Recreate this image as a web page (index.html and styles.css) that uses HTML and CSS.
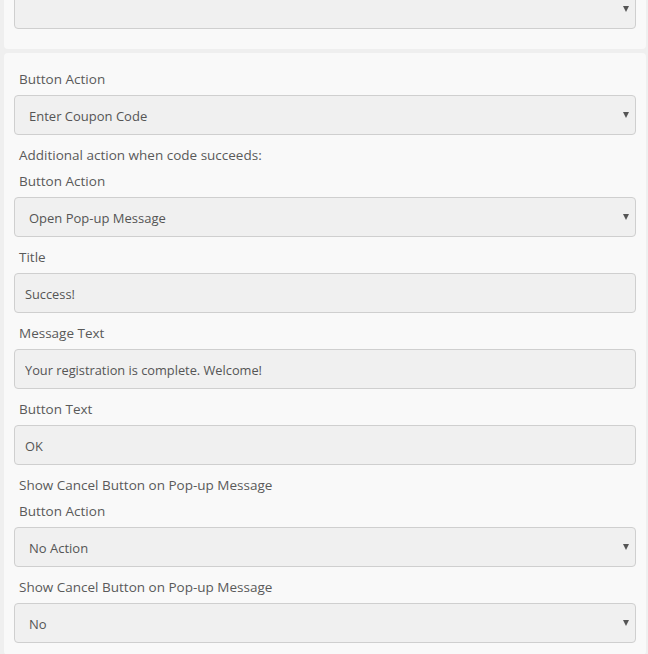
FILE: index.html
```html
<!DOCTYPE html>
<html lang="en">
  <head>
    <meta charset="UTF-8" />
    <meta name="viewport" content="width=device-width, initial-scale=1.0" />
    <title>Button Settings</title>
    <link rel="stylesheet" href="styles.css">
  </head>
  <body>
    <div class="panel panel-top">
      <div class="select-box"><span class="value"></span></div>
    </div>

    <div class="panel">
      <div class="field">
        <label>Button Action</label>
        <div class="select-box"><span class="value">Enter Coupon Code</span></div>
      </div>
      <div class="field">
        <label>Additional action when code succeeds:</label>
        <label>Button Action</label>
        <div class="select-box"><span class="value">Open Pop-up Message</span></div>
      </div>
      <div class="field">
        <label>Title</label>
        <input class="text-box" type="text" value="Success!" />
      </div>
      <div class="field">
        <label>Message Text</label>
        <input class="text-box" type="text" value="Your registration is complete. Welcome!" />
      </div>
      <div class="field">
        <label>Button Text</label>
        <input class="text-box" type="text" value="OK" />
      </div>
      <div class="field">
        <label>Show Cancel Button on Pop-up Message</label>
        <label>Button Action</label>
        <div class="select-box"><span class="value">No Action</span></div>
      </div>
      <div class="field">
        <label>Show Cancel Button on Pop-up Message</label>
        <div class="select-box"><span class="value">No</span></div>
      </div>
    </div>
  </body>
</html>
```

FILE: styles.css
```css
body {
  margin: 0;
  padding: 0 2px 0 4px;
  background-color: #efefef;
  font-family: "Open Sans", Arial, sans-serif;
  color: #555;
  overflow: hidden;
}

.panel {
  background-color: #f9f9f9;
  border-radius: 4px;
  padding: 13px 10px 12px;
  margin-bottom: 4px;
  display: flex;
  flex-direction: column;
  gap: 7px;
}

.panel-top {
  margin-top: -24px;
  padding-bottom: 20px;
}

.field {
  display: flex;
  flex-direction: column;
}

.field label {
  display: block;
  font-size: 13.5px;
  line-height: 25px;
  padding: 1px 0 0 5px;
  color: #5a5a5a;
}

.field label:last-of-type {
  margin-bottom: 3px;
}

.select-box {
  height: 40px;
  box-sizing: border-box;
  border: 1px solid #cfcfcf;
  border-radius: 4px;
  background-color: #f0f0f0;
  display: flex;
  align-items: center;
  padding: 2px 14px 0;
  font-size: 13px;
  color: #555;
}

.select-box .value {
  flex: 1;
}

.select-box::after {
  content: "";
  width: 0;
  height: 0;
  border-left: 3px solid transparent;
  border-right: 3px solid transparent;
  border-top: 6px solid #555;
  margin: -2px -8px 0 0;
}

.text-box {
  height: 40px;
  box-sizing: border-box;
  border: 1px solid #cfcfcf;
  border-radius: 4px;
  background-color: #f0f0f0;
  padding: 2px 10px 0;
  font-family: "Open Sans", Arial, sans-serif;
  font-size: 12.8px;
  color: #555;
  width: 100%;
  outline: none;
}
```
